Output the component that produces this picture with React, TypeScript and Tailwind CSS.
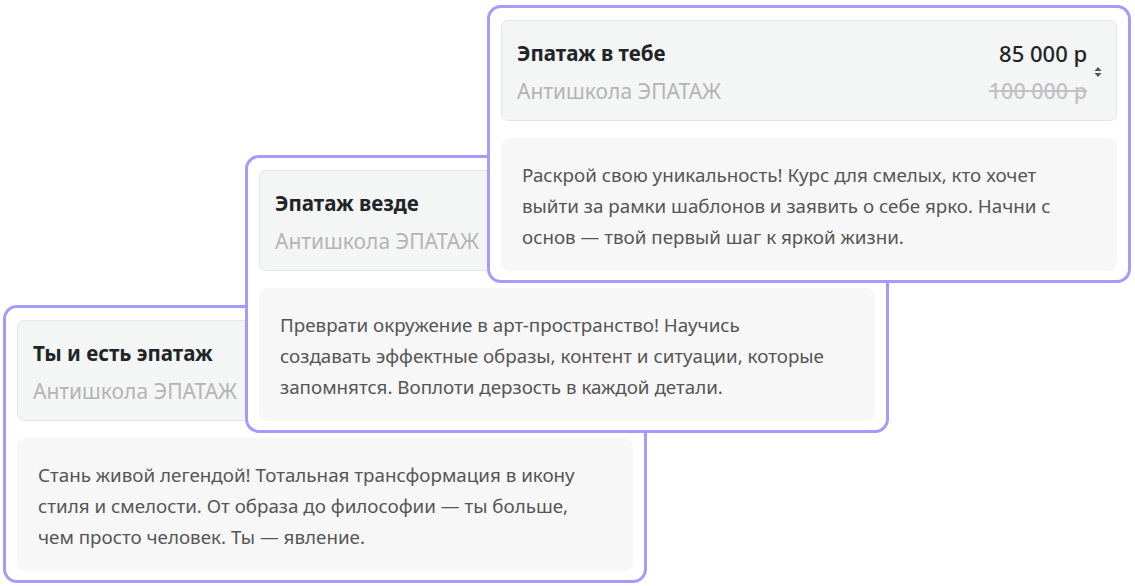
import React from 'react';

interface Course {
  title: string;
  school: string;
  lines: string[];
  price?: string;
  oldPrice?: string;
  left: string;
  top: string;
}

const courses: Course[] = [
  {
    title: 'Ты и есть эпатаж',
    school: 'Антишкола ЭПАТАЖ',
    lines: [
      'Стань живой легендой! Тотальная трансформация в икону',
      'стиля и смелости. От образа до философии — ты больше,',
      'чем просто человек. Ты — явление.',
    ],
    left: 'left-[3px]',
    top: 'top-[305px]',
  },
  {
    title: 'Эпатаж везде',
    school: 'Антишкола ЭПАТАЖ',
    lines: [
      'Преврати окружение в арт-пространство! Научись',
      'создавать эффектные образы, контент и ситуации, которые',
      'запомнятся. Воплоти дерзость в каждой детали.',
    ],
    left: 'left-[245px]',
    top: 'top-[155px]',
  },
  {
    title: 'Эпатаж в тебе',
    school: 'Антишкола ЭПАТАЖ',
    lines: [
      'Раскрой свою уникальность! Курс для смелых, кто хочет',
      'выйти за рамки шаблонов и заявить о себе ярко. Начни с',
      'основ — твой первый шаг к яркой жизни.',
    ],
    price: '85 000 р',
    oldPrice: '100 000 р',
    left: 'left-[487px]',
    top: 'top-[5px]',
  },
];

const SortIcon = () => (
  <svg width="8" height="12" viewBox="0 0 8 12" className="text-[#555]">
    <path d="M4 1 L7.5 5 H0.5 Z" fill="currentColor" />
    <path d="M4 11 L7.5 7 H0.5 Z" fill="currentColor" />
  </svg>
);

const CourseCard = ({ course }: { course: Course }) => (
  <div
    className={`absolute ${course.left} ${course.top} w-[644px] h-[278px] bg-white border-[3px] border-[#a39cfa] rounded-[14px] px-[11px] pt-[12px] pb-[11px] flex flex-col gap-[17px]`}
  >
    <div className="flex items-center justify-between bg-[#f4f5f5] border border-[#e4e6e6] rounded-[7px] pl-[15px] pr-[14px] pt-[18px] pb-[15px]">
      <div className="flex flex-col">
        <span className="text-[20.5px] leading-7 font-bold text-[#212529]">{course.title}</span>
        <span className="mt-[10px] text-[21px] leading-7 text-[#b4b4b4]">{course.school}</span>
      </div>
      {course.price && (
        <div className="flex items-center gap-[7px]">
          <div className="flex flex-col items-end">
            <span className="text-[22px] leading-7 font-medium text-[#212529]">{course.price}</span>
            <span className="mt-[10px] text-[21.5px] leading-7 font-medium text-[#c2c2c2] line-through">
              {course.oldPrice}
            </span>
          </div>
          <SortIcon />
        </div>
      )}
    </div>
    <div className="flex-1 bg-[#f7f7f7] rounded-[9px] pl-[21px] pr-[20px] pt-[22px] pb-[18px]">
      <p className="text-[18.8px] leading-[31px] text-[#555]">
        {course.lines.map((line, i) => (
          <span key={i} className="block whitespace-nowrap">
            {line}
          </span>
        ))}
      </p>
    </div>
  </div>
);

export default function App() {
  return (
    <div
      className="relative w-[1135px] h-[586px] bg-white overflow-hidden"
      style={{ fontFamily: '"Noto Sans", "Open Sans", sans-serif' }}
    >
      {courses.map((c, i) => (
        <CourseCard key={i} course={c} />
      ))}
    </div>
  );
}
